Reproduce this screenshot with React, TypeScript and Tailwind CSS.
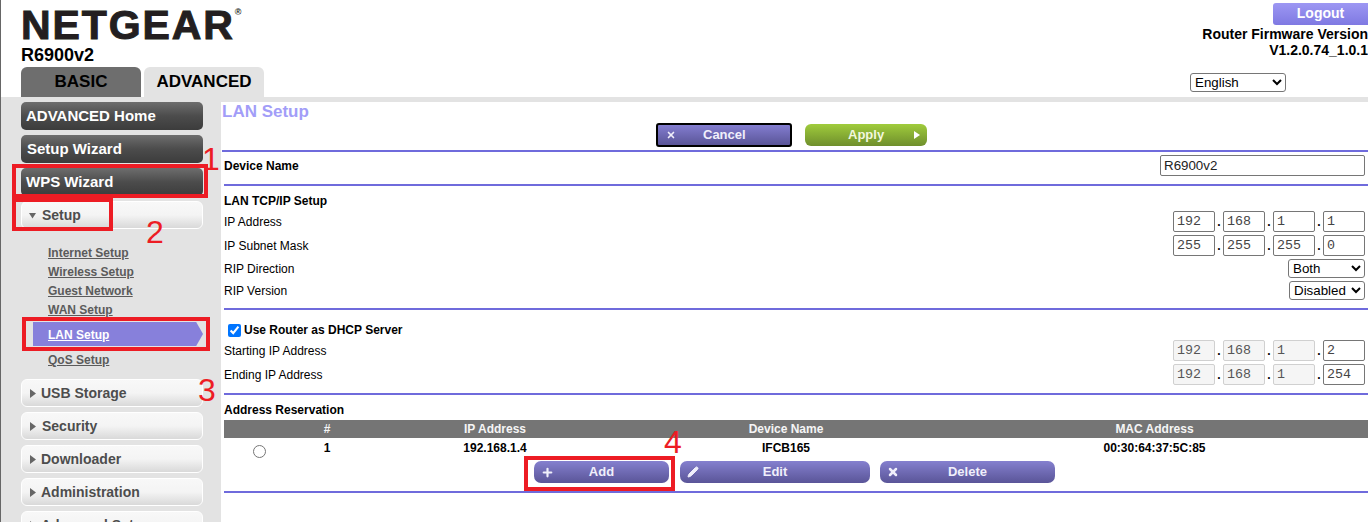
import { Pencil, Plus, X } from "lucide-react";
import type { ReactNode } from "react";

const FONT = "font-['Liberation_Sans',Arial,sans-serif]";

function Triangle({ down }: { down?: boolean }) {
  return (
    <svg width="9" height="9" viewBox="0 0 9 9" className="shrink-0" fill="#666">
      <path d={down ? "M1 2h7L4.5 7.5z" : "M2 0 8 4.5 2 9z"} />
    </svg>
  );
}

function DarkNav({ label, pad = "pl-[5px]" }: { label: string; pad?: string }) {
  return (
    <div
      className={`flex h-[28px] w-[182px] shrink-0 items-center rounded-[5px] bg-gradient-to-b from-[#6e6e6e] via-[#4c4c4c] to-[#3c3c3c] pt-[1px] text-[15px] font-bold text-white ${pad}`}
    >
      {label}
    </div>
  );
}

function LightNav({ label, open, gap = "gap-[4px]" }: { label: string; open?: boolean; gap?: string }) {
  return (
    <div
      className={`flex h-[28px] w-[182px] shrink-0 items-center rounded-[6px] border border-white bg-gradient-to-b from-[#f8f8f8] via-[#f4f4f4] to-[#d9d9d9] pl-[6px] text-[14px] font-bold text-[#4d4d4d] ${gap}`}
    >
      <Triangle down={open} />
      <span>{label}</span>
    </div>
  );
}

function SubLink({ label, className = "" }: { label: string; className?: string }) {
  return <div className={`h-[19px] pl-[27px] text-[12px] leading-[19px] font-bold text-[#5b5b5b] underline ${className}`}>{label}</div>;
}

function Sidebar() {
  return (
    <aside className="flex h-[420px] w-[221px] shrink-0 flex-col overflow-hidden bg-[#e3e3e3] pl-[21px]">
      <div className="flex flex-col gap-[5px]">
        <DarkNav label="ADVANCED Home" />
        <DarkNav label="Setup Wizard" pad="pl-[6px]" />
        <DarkNav label="WPS Wizard" />
        <LightNav label="Setup" open gap="gap-[5px]" />
      </div>
      <div className="mt-[15px] flex flex-col">
        <SubLink label="Internet Setup" />
        <SubLink label="Wireless Setup" />
        <SubLink label="Guest Network" />
        <SubLink label="WAN Setup" />
        <div
          className="mt-[2px] ml-[12px] flex h-[24px] w-[170px] items-center bg-[#8780db] pt-[2px] pl-[15px] text-[12px] font-bold text-white underline [clip-path:polygon(0_0,96%_0,100%_50%,96%_100%,0_100%)]"
        >
          LAN Setup
        </div>
        <SubLink label="QoS Setup" className="mt-[5px]" />
      </div>
      <div className="mt-[9px] flex flex-col gap-[5px]">
        <LightNav label="USB Storage" />
        <LightNav label="Security" gap="gap-[5px]" />
        <LightNav label="Downloader" />
        <LightNav label="Administration" />
        <LightNav label="Advanced Setup" />
      </div>
    </aside>
  );
}

function Divider({ inset }: { inset?: boolean }) {
  return <div className={`h-[2px] shrink-0 bg-[#6f6bdc] ${inset ? "ml-[3px]" : "ml-[1px]"}`} />;
}

function ActionButton({ icon, label, className }: { icon: ReactNode; label: string; className: string }) {
  return (
    <div
      className={`relative flex h-[22px] items-center justify-center rounded-[7px] bg-gradient-to-b from-[#8580cf] to-[#5a5598] text-[13px] font-bold text-[#f0effb] ${className}`}
    >
      <span className="absolute left-[7px] flex items-center">{icon}</span>
      <span>{label}</span>
    </div>
  );
}

function Octet({ value, disabled }: { value: string; disabled?: boolean }) {
  return (
    <div
      className={`flex h-[21px] w-[42px] items-center rounded-[2px] border pl-[3px] font-['Liberation_Mono',monospace] text-[13.33px] ${
        disabled ? "border-[#d0d0d0] bg-[#f5f5f5] text-[#555]" : "border-[#767676] bg-white text-[#444]"
      }`}
    >
      {value}
    </div>
  );
}

function IpInputs({ values, lockFirst }: { values: string[]; lockFirst?: boolean }) {
  return (
    <div className="flex items-center">
      {values.map((value, i) => (
        <div key={i} className="flex items-center">
          {i > 0 && <span className="w-[8px] text-center text-[12px] font-bold text-black">.</span>}
          <Octet value={value} disabled={lockFirst && i < 3} />
        </div>
      ))}
    </div>
  );
}

function Row({ label, children, className = "" }: { label: string; children: ReactNode; className?: string }) {
  return (
    <div className={`flex items-center justify-between pl-[3px] text-[12px] text-black ${className}`}>
      <span>{label}</span>
      {children}
    </div>
  );
}

function NativeSelect({ value, className }: { value: string; className: string }) {
  return (
    <select
      defaultValue={value}
      className={`block rounded-[3px] border border-[#767676] bg-white text-[13.33px] text-black ${className}`}
    >
      <option>{value}</option>
    </select>
  );
}

function MainPanel() {
  return (
    <main className="flex h-[420px] flex-1 flex-col overflow-hidden bg-white">
      <h1 className="h-[21px] pl-[1px] text-[17px] leading-[19px] font-bold text-[#a29df8]">LAN Setup</h1>
      <div className="flex h-[24px] items-center gap-[13px] pl-[435px]">
        <div className="flex h-[24px] w-[136px] items-center rounded-[3px] border-2 border-black bg-gradient-to-b from-[#837dd0] to-[#5a5598] pl-[8px] text-[13px] font-bold text-[#f0effb]">
          <X size={10} strokeWidth={4} />
          <span className="ml-[27px]">Cancel</span>
        </div>
        <div className="flex h-[22px] w-[122px] items-center rounded-[6px] bg-gradient-to-b from-[#a0cc3c] to-[#6f8f2c] pl-[43px] text-[13px] font-bold text-[#f2f7df]">
          <span>Apply</span>
          <svg width="6" height="8" viewBox="0 0 6 8" className="ml-[30px]" fill="#fff">
            <path d="M0 0 6 4 0 8z" />
          </svg>
        </div>
      </div>
      <div className="mt-[3px]">
        <Divider />
      </div>

      <Row label="Device Name" className="h-[32px] pr-[3px] pb-[5px] font-bold">
        <div className="flex h-[21px] w-[205px] items-center rounded-[2px] border border-[#767676] pl-[3px] text-[13.33px] font-normal text-[#222]">
          R6900v2
        </div>
      </Row>
      <Divider inset />

      <div className="flex h-[25px] items-center pt-[5px] pl-[3px] text-[12px] font-bold text-black">LAN TCP/IP Setup</div>
      <div className="flex flex-col gap-[3px] pr-[3px]">
        <Row label="IP Address">
          <IpInputs values={["192", "168", "1", "1"]} />
        </Row>
        <Row label="IP Subnet Mask">
          <IpInputs values={["255", "255", "255", "0"]} />
        </Row>
        <Row label="RIP Direction">
          <NativeSelect value="Both" className="h-[19px] w-[77px]" />
        </Row>
        <Row label="RIP Version">
          <NativeSelect value="Disabled" className="h-[19px] w-[76px]" />
        </Row>
      </div>
      <div className="mt-[8px]">
        <Divider inset />
      </div>

      <label className="flex h-[30px] items-center gap-[3px] pt-[10px] pl-[7px] text-[12px] font-bold text-black">
        <input type="checkbox" defaultChecked className="m-0 h-[13px] w-[13px]" />
        Use Router as DHCP Server
      </label>
      <div className="flex flex-col gap-[3px] pr-[3px]">
        <Row label="Starting IP Address">
          <IpInputs values={["192", "168", "1", "2"]} lockFirst />
        </Row>
        <Row label="Ending IP Address">
          <IpInputs values={["192", "168", "1", "254"]} lockFirst />
        </Row>
      </div>
      <div className="mt-[8px]">
        <Divider inset />
      </div>

      <div className="flex h-[25px] items-center pt-[4px] pl-[3px] text-[12px] font-bold text-black">Address Reservation</div>
      <div className="ml-[3px]">
        <div className="grid h-[18px] grid-cols-[71px_64px_272px_310px_1fr] items-center bg-[#757575] text-center text-[12px] font-bold text-[#f5f5f5]">
          <span />
          <span>#</span>
          <span>IP Address</span>
          <span>Device Name</span>
          <span>MAC Address</span>
        </div>
        <div className="grid h-[23px] grid-cols-[71px_64px_272px_310px_1fr] items-center text-center text-[12px] font-bold text-black">
          <span className="flex justify-center pt-[3px]">
            <input type="radio" className="m-0 h-[13px] w-[13px]" />
          </span>
          <span className="pb-[3px]">1</span>
          <span className="pb-[3px]">192.168.1.4</span>
          <span className="pb-[3px]">IFCB165</span>
          <span className="pb-[3px]">00:30:64:37:5C:85</span>
        </div>
      </div>
      <div className="flex items-center pl-[313px]">
        <ActionButton icon={<Plus size={13} strokeWidth={4} />} label="Add" className="w-[135px]" />
        <ActionButton icon={<Pencil size={12} strokeWidth={2} fill="currentColor" />} label="Edit" className="ml-[11px] w-[190px]" />
        <ActionButton icon={<X size={12} strokeWidth={5} />} label="Delete" className="ml-[10px] w-[175px]" />
      </div>
      <div className="mt-[8px]">
        <Divider inset />
      </div>
    </main>
  );
}

function Header() {
  return (
    <header className="flex h-[97px] justify-between">
      <div className="flex flex-col pl-[21px]">
        <div className="flex h-[45px] items-start">
          <span className="mt-[5px] text-[41px] leading-[40px] font-bold tracking-[1.9px] text-[#231f20] [-webkit-text-stroke:1px_#231f20]">
            NETGEAR
          </span>
          <span className="mt-[8px] text-[9px] leading-[9px] font-bold text-[#231f20]">®</span>
        </div>
        <div className="h-[22px] text-[18px] leading-[21px] font-bold text-black">R6900v2</div>
        <div className="flex items-end gap-[3px]">
          <div className="flex h-[30px] w-[120px] items-center justify-center rounded-t-[6px] bg-[#6e6e6e] text-[17px] font-bold text-black">
            BASIC
          </div>
          <div className="flex h-[30px] w-[120px] items-center justify-center rounded-t-[6px] bg-[#e3e3e3] text-[17px] font-bold text-black">
            ADVANCED
          </div>
        </div>
      </div>
      <div className="flex flex-col items-end pt-[3px]">
        <div className="flex h-[22px] w-[95px] items-center justify-center rounded-l-[3px] bg-gradient-to-b from-[#9d97f3] to-[#7f79e2] pb-[2px] text-[14px] font-bold text-white">
          Logout
        </div>
        <div className="mt-[1px] text-right text-[14px] leading-[16px] font-bold text-black">
          <div>Router Firmware Version</div>
          <div>V1.2.0.74_1.0.1</div>
        </div>
        <div className="mt-[15px] mr-[82px]">
          <NativeSelect value="English" className="h-[19px] w-[96px]" />
        </div>
      </div>
    </header>
  );
}

function Annotations() {
  const box = "pointer-events-none absolute border-4 border-[#ed1c24]";
  const num = "pointer-events-none absolute text-[32px] leading-[32px] text-[#ed1c24]";
  return (
    <>
      <div className={`${box} left-[12px] top-[164px] h-[34px] w-[196px]`} />
      <div className={`${box} left-[12px] top-[198px] h-[33px] w-[101px]`} />
      <div className={`${box} left-[22px] top-[317px] h-[34px] w-[188px]`} />
      <div className={`${box} left-[524px] top-[456px] h-[35px] w-[151px]`} />
      <span className={`${num} left-[202px] top-[143px]`}>1</span>
      <span className={`${num} left-[146px] top-[216px]`}>2</span>
      <span className={`${num} left-[198px] top-[374px]`}>3</span>
      <span className={`${num} left-[664px] top-[426px]`}>4</span>
    </>
  );
}

export default function App() {
  return (
    <div className={`relative h-[522px] w-[1368px] overflow-hidden bg-white ${FONT}`}>
      <Header />
      <div className="h-[5px] bg-[#e3e3e3]" />
      <div className="flex">
        <Sidebar />
        <MainPanel />
      </div>
      <Annotations />
      <div className="absolute inset-y-0 left-0 w-px bg-[#666]" />
    </div>
  );
}
